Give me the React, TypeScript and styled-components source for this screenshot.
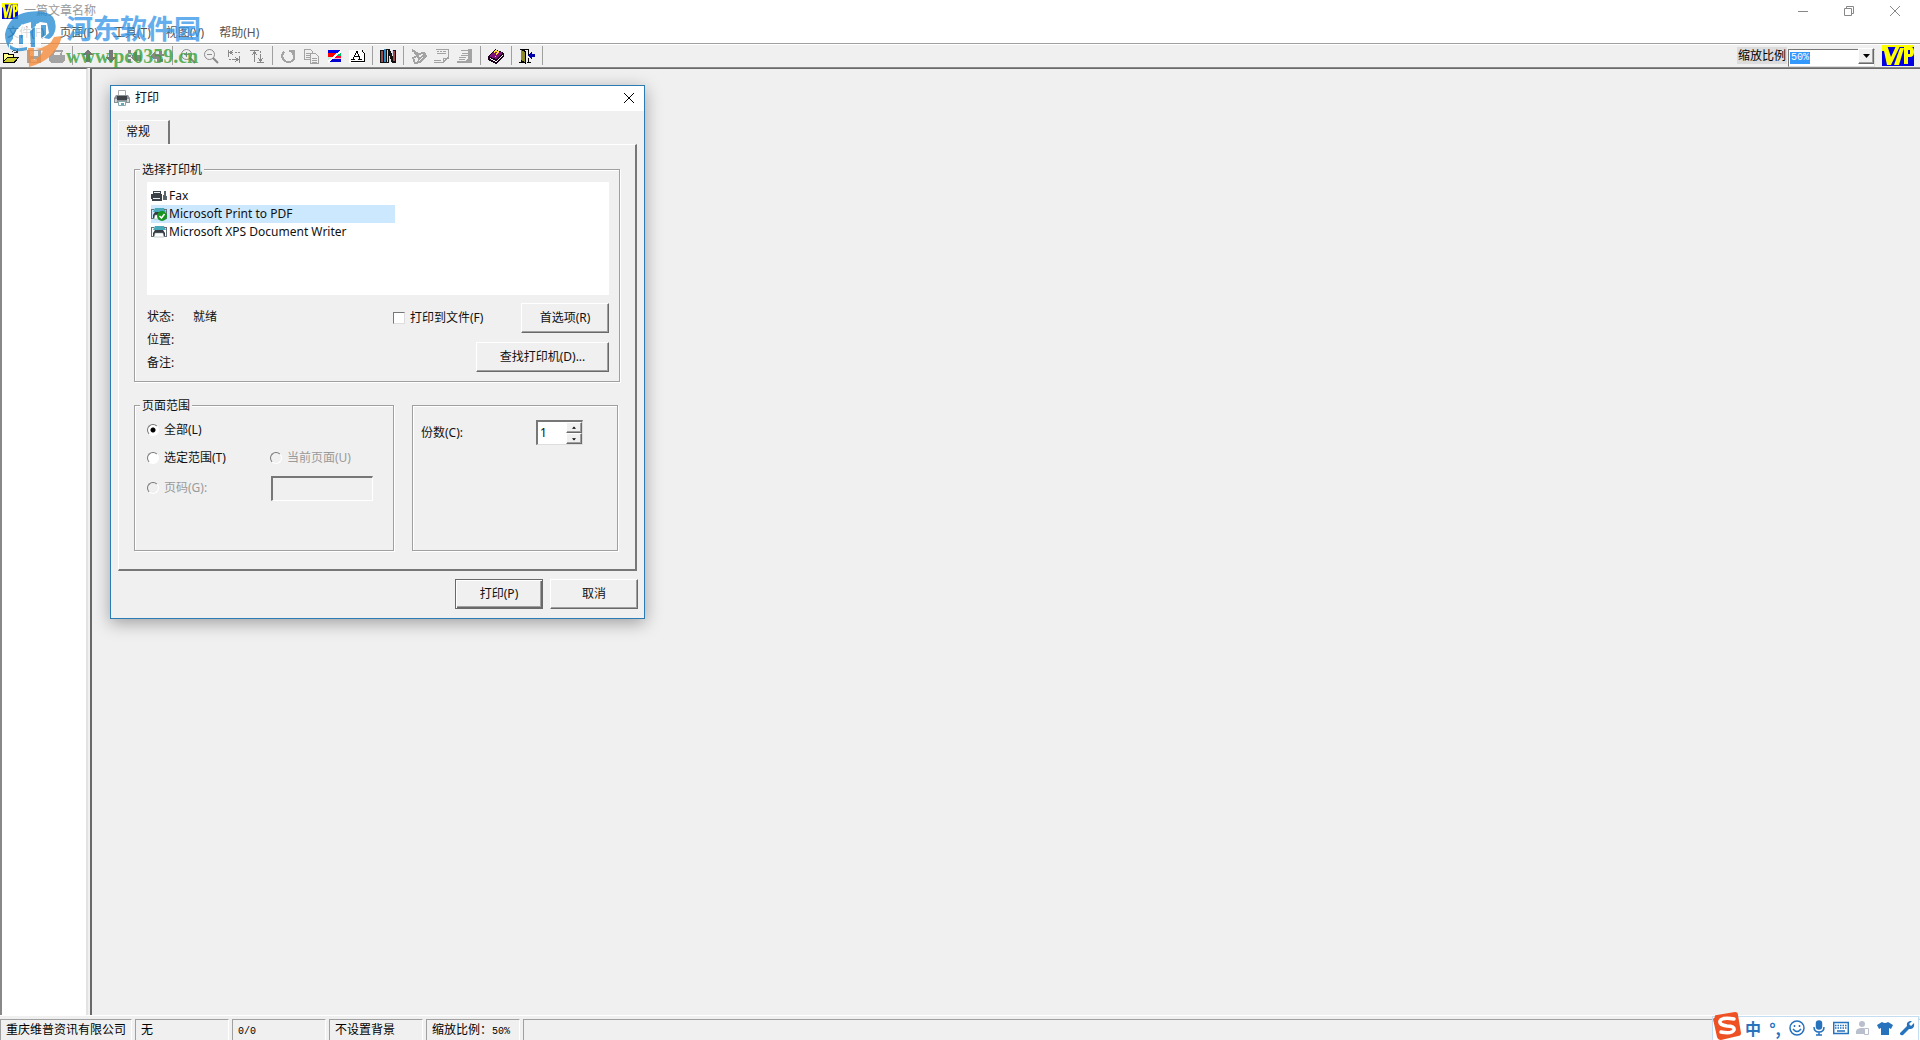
import React, { useState } from "react";
import styled, { createGlobalStyle, css } from "styled-components";

const face = "#f0f0f0";
const uiFont = '"Noto Sans", "Noto Sans CJK SC", sans-serif';
const songFont = '"Noto Sans CJK SC", sans-serif';

const GlobalStyle = createGlobalStyle`
  *, *::before, *::after { box-sizing: border-box; }
  body { margin: 0; font: 12px/18px ${uiFont}; color: #111; background: ${face}; }
  button, input, select { font: inherit; color: inherit; margin: 0; padding: 0; }
  svg { display: block; }
`;

const raised = css`
  border: 1px solid;
  border-color: #fff #696969 #696969 #fff;
  box-shadow: inset -1px -1px 0 #a0a0a0;
`;

/* ---------- application shell ---------- */

const Shell = styled.div`
  position: relative;
  display: flex;
  flex-direction: column;
  height: 100vh;
  overflow: hidden;
`;

const TitleBar = styled.header`
  display: flex;
  align-items: center;
  height: 22px;
  padding: 0 2px;
  background: #fff;
  color: #999;
`;

const AppTitle = styled.h1`
  flex: 1;
  margin: 0 0 0 6px;
  font-size: 12px;
  font-weight: 400;
`;

const WindowButton = styled.button`
  display: grid;
  place-items: center;
  width: 46px;
  height: 20px;
  border: 0;
  background: none;
`;

const MenuBar = styled.nav`
  display: flex;
  align-items: center;
  height: 21px;
  padding-left: 7px;
  gap: 15px;
  background: #fff;
`;

const MenuButton = styled.button`
  border: 0;
  background: none;
  color: #555;
  line-height: 20px;
`;

const ToolBar = styled.div`
  display: flex;
  align-items: center;
  height: 25px;
  background: ${face};
  border-top: 1px solid #a0a0a0;
  border-bottom: 1px solid #888;
  box-shadow: inset 0 1px 0 #fff;
`;

const ToolButton = styled.button`
  display: grid;
  place-items: center;
  width: 23px;
  height: 22px;
  padding-right: 1px;
  border: 0;
  background: none;
`;

const Separator = styled.span`
  width: 8px;
  height: 19px;
  background: linear-gradient(#a0a0a0, #a0a0a0) 3px 0 / 1px 19px no-repeat;
`;

const ZoomField = styled.div`
  display: flex;
  align-items: center;
  gap: 1px;
  margin-left: auto;
  margin-right: 6px;
`;

const ZoomLabel = styled.label`
  height: 17px;
  padding: 0 1px;
  background: #dcdcdc;
  color: #000;
  font-family: ${songFont};
  line-height: 16px;
`;

const SelectBox = styled.div`
  position: relative;
  width: 87px;
  height: 18px;
  margin-right: 6px;
`;

const ZoomSelect = styled.select`
  appearance: none;
  width: 100%;
  height: 100%;
  padding-left: 2px;
  border: 1px solid;
  border-color: #777 #ddd #ddd #777;
  border-radius: 0;
  background: linear-gradient(#3399ff, #3399ff) 1px 2px / 20px 12px no-repeat, #fff;
  color: #fff;
  font: 10px/12px "Liberation Mono", monospace;
`;

const SelectArrow = styled.span`
  position: absolute;
  top: 1px;
  right: 1px;
  display: grid;
  place-items: center;
  width: 16px;
  height: 16px;
  background: ${face};
  pointer-events: none;
  ${raised}
`;

const Workspace = styled.main`
  position: relative;
  display: flex;
  flex: 1;
  min-height: 0;
`;

const SidePanel = styled.aside`
  width: 88px;
  border-left: 2px solid #888;
  border-top: 1px solid #696969;
  border-right: 2px solid #e3e3e3;
  background: #fff;
`;

const Canvas = styled.section`
  flex: 1;
  margin-left: 2px;
  border: solid #696969;
  border-width: 1px 0 0 2px;
  background: ${face};
`;

const StatusBar = styled.footer`
  display: flex;
  gap: 3px;
  height: 25px;
  padding-top: 3px;
  border-top: 1px solid #fff;
  background: ${face};
  color: #000;
  font-family: ${songFont};
`;

const StatusCell = styled.div<{ $width?: number }>`
  ${(p) => (p.$width ? `width: ${p.$width}px;` : "flex: 1;")}
  padding-left: 5px;
  border: solid;
  border-width: 1px 1px 0 1px;
  border-color: #a0a0a0 #fff #fff #a0a0a0;
`;

const Mono = styled.span`
  font: 10px/18px "Liberation Mono", monospace;
`;

/* ---------- print dialog ---------- */

const Dialog = styled.div`
  position: absolute;
  top: 17px;
  left: 110px;
  width: 535px;
  border: 1px solid #2b7bb4;
  background: ${face};
  box-shadow: 0 4px 16px rgba(0, 0, 0, 0.34);
`;

const DialogTitle = styled.div`
  display: flex;
  align-items: center;
  gap: 5px;
  height: 25px;
  padding: 0 0 1px 3px;
  background: #fff;
`;

const DialogHeading = styled.h2`
  flex: 1;
  margin: 0;
  font-size: 12px;
  font-weight: 400;
`;

const CloseButton = styled.button`
  display: grid;
  place-items: center;
  width: 31px;
  height: 24px;
  border: 0;
  background: none;
`;

const DialogBody = styled.div`
  padding: 9px 6px 9px 7px;
`;

const Tab = styled.button`
  display: block;
  width: 52px;
  height: 24px;
  padding: 0 0 1px 7px;
  border: solid;
  border-width: 1px 2px 0 1px;
  border-color: #fff #777 #fff #fff;
  background: ${face};
  text-align: left;
`;

const TabPanel = styled.div`
  margin-right: 1px;
  padding: 15px 15px 18px;
  border: solid;
  border-width: 1px 2px 2px 1px;
  border-color: #fff #777 #777 #fff;
`;

const Group = styled.fieldset`
  min-width: 0;
  margin: 0;
  padding: 0 10px 7px 12px;
  border: 1px solid #a0a0a0;
  box-shadow: 1px 1px 0 #fff, inset 1px 1px 0 #fff;
`;

const Legend = styled.legend`
  height: 18px;
  margin-left: -7px;
  padding: 0 2px;
  background: ${face};
  line-height: 20px;
`;

const PrinterList = styled.ul`
  height: 113px;
  margin: 4px 0 8px;
  padding: 5px 4px;
  background: #fff;
  list-style: none;
`;

const PrinterRow = styled.li<{ $selected: boolean }>`
  display: flex;
  align-items: center;
  gap: 2px;
  width: 244px;
  height: 18px;
  background: ${(p) => (p.$selected ? "#cce8ff" : "transparent")};
`;

const Details = styled.div`
  display: flex;
  justify-content: space-between;
`;

const Facts = styled.dl`
  display: grid;
  grid-template-columns: 46px auto;
  grid-auto-rows: 23px;
  align-items: center;
  margin: 0;
  padding-top: 2px;
`;

const FactText = styled.dd`
  margin: 0;
`;

const Actions = styled.div`
  display: flex;
  flex-direction: column;
  align-items: flex-end;
  gap: 9px;
`;

const ActionRow = styled.div`
  display: flex;
  align-items: center;
  justify-content: space-between;
  width: 216px;
`;

const PushButton = styled.button<{ $wide?: boolean; $default?: boolean }>`
  width: ${(p) => (p.$wide ? 133 : 88)}px;
  height: 30px;
  background: ${face};
  ${raised}
  ${(p) =>
    p.$default &&
    css`
      border-color: #696969;
      box-shadow: inset 1px 1px 0 #fff, inset -1px -1px 0 #696969, inset -2px -2px 0 #a0a0a0;
    `}
`;

const Choice = styled.label<{ $disabled?: boolean }>`
  display: flex;
  align-items: center;
  gap: 5px;
  color: ${(p) => (p.$disabled ? "#9a9a9a" : "#111")};
`;

const CheckInput = styled.input`
  appearance: none;
  width: 12px;
  height: 12px;
  border: 1px solid;
  border-color: #777 #ddd #ddd #777;
  background: #fff;
  &:checked { background: radial-gradient(#000 3px, #fff 4px); }
`;

const RadioInput = styled.input`
  appearance: none;
  width: 12px;
  height: 12px;
  border: 1px solid;
  border-color: #777 #fff #fff #777;
  border-radius: 50%;
  background: #fff;
  &:checked { background: radial-gradient(circle, #000 2px, #fff 3px); }
  &:disabled { background: ${face}; }
`;

const Columns = styled.div`
  display: flex;
  align-items: flex-end;
  gap: 18px;
  margin-top: 14px;
  padding-right: 2px;
`;

const RangeGroup = styled(Group)`
  width: 260px;
  height: 155px;
`;

const RangeGrid = styled.div`
  display: grid;
  grid-template-columns: 123px 1fr;
  grid-template-rows: 28px 28px 32px;
  align-items: center;
  padding-top: 2px;
`;

const PagesInput = styled.input`
  width: 102px;
  height: 25px;
  margin-left: 1px;
  border: solid;
  border-width: 2px 1px 1px 2px;
  border-color: #777 #fff #fff #777;
  background: ${face};
`;

const CopiesGroup = styled(Group)`
  flex: 1;
  height: 146px;
  padding: 14px 0 0 8px;
`;

const CopiesRow = styled.div`
  display: flex;
  align-items: center;
  justify-content: space-between;
  padding-right: 34px;
`;

const Spinner = styled.div`
  display: flex;
  width: 47px;
  height: 25px;
  border: solid;
  border-width: 2px 1px 1px 2px;
  border-color: #777 #ddd #ddd #777;
  background: #fff;
`;

const CopiesInput = styled.input`
  appearance: textfield;
  flex: 1;
  min-width: 0;
  height: 20px;
  padding-left: 2px;
  border: 0;
  background: none;
  outline: none;
  &::-webkit-inner-spin-button { appearance: none; }
`;

const SpinColumn = styled.div`
  display: flex;
  flex-direction: column;
  width: 16px;
`;

const SpinButton = styled.button`
  display: grid;
  flex: 1;
  place-items: center;
  background: ${face};
  ${raised}
`;

const DialogFooter = styled.div`
  display: flex;
  justify-content: flex-end;
  gap: 7px;
  padding-top: 8px;
`;

/* ---------- floating overlays ---------- */

const Watermark = styled.div`
  position: absolute;
  top: 10px;
  left: 4px;
  display: flex;
  gap: 4px;
  opacity: 0.78;
  pointer-events: none;
`;

const WatermarkText = styled.div`
  padding-top: 2px;
`;

const WatermarkName = styled.div`
  color: #3a98ea;
  font: 700 27px/32px ${songFont};
`;

const WatermarkUrl = styled.div`
  color: #35a035;
  font: 700 20px/24px "Liberation Serif", serif;
`;

const ImeBar = styled.div`
  position: absolute;
  right: 1px;
  bottom: 0;
  display: flex;
  align-items: center;
  height: 24px;
  padding-bottom: 2px;
  border: 1px solid #c5ddf0;
  border-bottom: 0;
  background: #fff;
`;

const ImeLogo = styled.div`
  margin: -4px 1px 0 0;
`;

const ImeButton = styled.button`
  display: grid;
  place-items: center;
  width: 22px;
  height: 22px;
  border: 0;
  background: none;
  color: #2672bd;
  font: 700 16px/20px ${songFont};
`;

/* ---------- drawings ---------- */

const VipLogo = ({ w, h }: { w: number; h: number }) => (
  <svg width={w} height={h} viewBox="0 0 32 21" preserveAspectRatio="none">
    <path fill="#0000e0" d="M0 0h32v21H0z" />
    <path fill="#ff0" d="M0 0h32v2H0z" />
    <path fill="#ff0" d="M0 0h5l4 12L14 1h4L9 20H5L2 6H0z" />
    <path fill="#ff0" d="M18 3h4l-5 17h-5z" />
    <path fill="#ff0" fillRule="evenodd" d="M22 2h7q3 0 3 5t-4 5h-2v7h-4zM26 5v4h2V5z" />
  </svg>
);

const gray = "#a3a3a3";
const icons: Record<string, React.ReactNode> = {
  open: (
    <>
      <path fill="#000" d="M0 5h5l1 1h5v3h5l-4 6H0z" />
      <path fill="#ff8" d="M1 6h3l1 1h5v2H4l-3 4z" />
      <path fill="#cc3" d="M4 10h10l-3 4H1z" />
      <path fill="none" stroke="#333" d="M9 4q3-3 5 0M14 1v3h-3" />
    </>
  ),
  save: <path fill={gray} d="M1 2h14v13H1zM4 3v5h8V3zM5 11v3h6v-3z" fillRule="evenodd" />,
  print: <path fill={gray} d="M5 2h9l-1 5h3v6l-3 2H3l-3-2V8l3-2zM6 4l-1 3h6l1-3z" fillRule="evenodd" />,
  up: <path fill="#777" d="M8 1l5 6h-3v7H6V7H3z" />,
  down: <path fill="#777" d="M8 15l5-6h-3V2H6v7H3z" />,
  first: <path fill="#888" d="M2 2h3v3H2zM2 7h3v2H2zM8 4h3v3h4v6H8l-3-3zM2 11h3v3H2z" />,
  last: <path fill="#888" d="M1 8l5-5v3h4V3h3v3h2v2h-3v3h2v3H8v-3H5z" />,
  zoomIn: (
    <g fill="none" stroke="#8a8a8a">
      <circle cx="6.500" cy="6.500" r="5" />
      <path d="M4 6.500h5M6.500 4v5" />
      <path strokeWidth="2" d="M10 10l5 5" />
    </g>
  ),
  zoomOut: (
    <g fill="none" stroke="#8a8a8a">
      <circle cx="6.500" cy="6.500" r="5" />
      <path d="M4 6.500h5" />
      <path strokeWidth="2" d="M10 10l5 5" />
    </g>
  ),
  fitWidth: (
    <g fill="none" stroke="#888">
      <path d="M2.500 2v7M13.500 8v7M4 4.500h3M9 4.500h2M12 4.500h2M7 2L4 4.500 7 7M3 11.500h2M6 11.500h6M9 9l3 2.500L9 14" />
    </g>
  ),
  fitHeight: (
    <g fill="none" stroke="#888">
      <path d="M1 2.500h9M8 14.500h7M5.500 4v10M3 7l2.500-3L8 7M11.500 3v2M11.500 6v7M9 10l2.500 3 2.500-3" />
    </g>
  ),
  rotate: <path fill="none" stroke={gray} strokeWidth="2" d="M4 4Q1 7 3 11q3 4 7 3 5-2 4-6L12 4M9 3h5v5" />,
  copy: (
    <g fill="none" stroke={gray}>
      <path d="M1.500 1.500h6l2 2v8h-8zM3 5h4M3 7h4M3 9h4" />
      <path fill={face} d="M7.500 5.500h5l3 3v7h-8zM9 10h5M9 12h5M9 14h5" />
    </g>
  ),
  colours: (
    <>
      <path fill="#0000e8" d="M2 2h13L2 14z" />
      <path fill="#f00" d="M2 5h9L7 9H2z" />
      <path fill="#c8f0e0" d="M2 9h5l-5 5z" />
      <path fill="#f4b8d0" d="M15 2v12H3z" />
      <path fill="#0b6" d="M15 5v3h-5z" />
      <path fill="#f03" d="M9 8h6v2H7z" />
      <path fill="#0000d0" d="M6 11h9v3H3z" />
      <path stroke="#fff" strokeWidth="2" d="M2 14L15 3" />
    </>
  ),
  letter: (
    <>
      <path fill="#fff" d="M0 2h13l3 4v9H0z" />
      <path fill="none" stroke="#000" d="M13 2.500l2.500 3v8H2M4 11l4-8 3 8M6 8h4M2 11.500h4M9 11.500h4" />
    </>
  ),
  books: (
    <>
      <path fill="#111" d="M0 2h4v13H0zM8 1h2l1 3 2 5V2h3v13h-4L9 7v8H4V2z" />
      <path fill="#9a4b4b" d="M1 3h2v11H1zM13 3h2v10h-2z" />
      <path fill="#2b8bc8" d="M4 1h2v13H4z" />
      <path fill="#d8d8e8" d="M7 2h1v12H7zM9 9h1v5H9zM12 2h1v5h-1z" />
    </>
  ),
  scan: (
    <g fill="none" stroke={gray} strokeWidth="2">
      <path d="M1 2l6 4 6-1 2 3-6 6-5 1-2-5 6-3M4 5l5 6M7 12l7-6" />
    </g>
  ),
  note: (
    <g fill="none" stroke={gray}>
      <path d="M2 1.500h13M3 3.500h2M6 3.500h2M9 3.500h3M3 5.500h9M14.500 1v8l-5 5H0M9.500 14v-4h5M0 12.500h7" />
    </g>
  ),
  page: (
    <>
      <path fill={gray} d="M11 1h4v14H0v-2h8l3-3z" />
      <path stroke={gray} d="M4 2.500h7M5 5.500h7M4 7.500h7M2 9.500h7M2 11.500h6" />
    </>
  ),
  help: (
    <>
      <path fill="#1b001b" d="M7 1l9 4v4l-8 7-8-4V8z" />
      <path fill="#80107a" d="M7 2l8 3-7 6-7-3z" />
      <path fill="#fff" d="M2 10l6 3 7-6v1l-7 6-6-3z" />
      <path fill="none" stroke="#fd3" strokeWidth="1.500" d="M6 4q3-2 4 0 0 1-2 2M7.500 7.500v1" />
    </>
  ),
  exit: (
    <>
      <path fill="none" stroke="#000" d="M1 1.500h8.500v5M9.500 10v4M0 14.500h4M8 14.500h4" />
      <path fill="#000" d="M2 1l5 2v13l-5-2z" />
      <path fill="#8c8c2a" d="M2 2l4 2v10l-4-2z" />
      <path fill="#0000a8" d="M9 7l4-4v3h3v3h-3v3z" />
    </>
  ),
};

const Glyph = ({ name }: { name: string }) => (
  <svg width="16" height="16" viewBox="0 0 16 16" shapeRendering={name.startsWith("zoom") ? "auto" : "crispEdges"}>
    {icons[name]}
  </svg>
);

const PrinterGlyph = ({ kind }: { kind: "title" | "fax" | "pdf" | "xps" }) => (
  <svg width="16" height="16" viewBox="0 0 16 16">
    {kind === "title" && (
      <>
        <path fill="#fff" stroke="#aaa" d="M4.500.5h7v6h-7z" />
        <path fill="#8b9297" d="M2 5h12l2 3v5H0V8z" />
        <path fill="#cfd5d8" d="M1 9h2v3H1zM13 9h2v3h-2z" />
        <path fill="#3d4347" d="M3 6h10v4H3z" />
        <path fill="#fff" stroke="#8aa" d="M4.500 11.500h7v4h-7z" />
        <path fill="#56a9c9" d="M7 13h3v2H7z" />
      </>
    )}
    {kind === "fax" && (
      <>
        <path fill="#394147" d="M2 3h8v3h1v7H1v-2H0V6h2z" />
        <path fill="#e9eef0" d="M3 4h6v1H3zM2 10h7v1H2z" />
        <path fill="#58636a" d="M12 7h1V3h2v5h1v4h-4z" />
      </>
    )}
    {(kind === "xps" || kind === "pdf") && (
      <>
        <path fill="#4aa9b8" d="M4 2h9l2 4H2z" />
        <path fill="#657078" d="M0 3h3v1H1v8h2v1H0zM13 3h3v10h-3v-1h2V4h-2z" />
        <path fill="#343c42" d="M4 6h8l2 3v3H2V9z" />
        <path fill="#fff" stroke="#87989c" strokeWidth=".5" d="M4 9h8l1 4H3z" />
      </>
    )}
    {kind === "pdf" && (
      <>
        <circle cx="11" cy="10" r="5" fill="#16941f" />
        <path fill="none" stroke="#fff" strokeWidth="1.500" d="M8.500 10l2 2 3-4" />
      </>
    )}
  </svg>
);

const CrossGlyph = ({ color, size = 10 }: { color: string; size?: number }) => (
  <svg width={size} height={size} viewBox="0 0 10 10">
    <path stroke={color} d="M0 0l10 10M10 0L0 10" />
  </svg>
);

const ArrowGlyph = ({ up, size = 7 }: { up?: boolean; size?: number }) => (
  <svg width={size} height={size} viewBox="0 0 7 7">
    <path fill="#000" d={up ? "M0 5h7L3.500 1z" : "M0 2h7L3.500 6z"} />
  </svg>
);

const SiteLogo = () => (
  <svg width="58" height="57" viewBox="0 0 58 57">
    <path
      fill="#268bd2"
      d="M1 24Q5 5 24 2q18-3 25 5 4 6 2 14-2 6-6 8l-5-1q6-7 2-12-4-4-10-2v8l-5-4V12l-7 2-9 6v6l-6 8v4Q1 32 1 24z"
    />
    <path fill="#fff" d="M9 26l9-12 9 6 9-8 7 1 2 10-8 7v7h-6V25h-5v14h-7V26l-4 2v10h-6z" />
    <path fill="#268bd2" d="M6 35q5 5 17 2v3q-11 3-17-1zM15 25h4v9h-4zM26 21l5-4v20h-4zM37 15h5v10l-5 3z" />
    <path fill="#f58a38" d="M58 26Q52 50 25 57l-1-19h6v12q6-3 9-9l-7-2q14-2 18-12z" />
  </svg>
);

const SogouLogo = () => (
  <svg width="28" height="28" viewBox="0 0 28 28">
    <path fill="#ee5124" d="M2 5Q1 3 4 3L22 0q3 0 3 3l3 18q0 3-3 3L8 28q-3 0-4-3L0 7z" />
    <path fill="none" stroke="#fff" strokeWidth="3.500" strokeLinecap="round" d="M21 7Q9 5 7 9q-1 4 7 5 8 0 7 4-2 4-13 2" />
  </svg>
);

const imeIcons: Record<string, React.ReactNode> = {
  表情: (
    <g fill="none" stroke="currentColor" strokeWidth="1.500">
      <circle cx="8" cy="8" r="7" />
      <path d="M4 9q4 5 8 0M5.500 5v2M10.500 5v2" />
    </g>
  ),
  语音: (
    <g fill="none" stroke="currentColor" strokeWidth="1.500">
      <rect x="5.500" y="1" width="5" height="8" rx="2.500" fill="currentColor" />
      <path d="M3 7q0 5 5 5t5-5M8 12v3M5 15h6" />
    </g>
  ),
  键盘: (
    <g fill="none" stroke="currentColor" strokeWidth="1.500">
      <path d="M.7 2.500h14.600v11H.7zM4 11h8" />
      <path strokeDasharray="1.500 1" d="M2 5.500h12M2 8h12" />
    </g>
  ),
  账户: (
    <g fill="#b9bfcc">
      <circle cx="7" cy="4" r="3" />
      <path d="M1 14q-1-6 5-6h3v6z" />
      <path fill="#fff" stroke="#b9bfcc" d="M9.500 8.500h4v6h-4z" />
    </g>
  ),
  皮肤: <path fill="currentColor" d="M5 2q3 2 6 0l5 3-2 4-2-1v7H4V8L2 9 0 5z" />,
  工具: <path fill="currentColor" d="M1 13l7-7q-1-4 3-5h2l-3 3 2 2 3-3q1 5-3 6h-2l-6 6q-2 1-3-1z" />,
};

/* ---------- page ---------- */

const menus = ["文件(F)", "页面(P)", "工具(T)", "视图(V)", "帮助(H)"];

const toolGroups: [string, string][][] = [
  [["open", "打开"], ["save", "保存"], ["print", "打印"]],
  [["up", "上一页"], ["down", "下一页"], ["first", "首页"], ["last", "末页"]],
  [["zoomIn", "放大"], ["zoomOut", "缩小"], ["fitWidth", "适合宽度"], ["fitHeight", "适合高度"]],
  [["rotate", "旋转"], ["copy", "复制"], ["colours", "背景"], ["letter", "文字"]],
  [["books", "书库"]],
  [["scan", "识别"], ["note", "批注"], ["page", "页面"]],
  [["help", "帮助"]],
  [["exit", "退出"]],
];

const printers: { name: string; kind: "fax" | "pdf" | "xps" }[] = [
  { name: "Fax", kind: "fax" },
  { name: "Microsoft Print to PDF", kind: "pdf" },
  { name: "Microsoft XPS Document Writer", kind: "xps" },
];

function PrintDialog() {
  const [printer, setPrinter] = useState(1);
  const [range, setRange] = useState("all");
  const [copies, setCopies] = useState(1);

  return (
    <Dialog role="dialog" aria-labelledby="print-title">
      <DialogTitle>
        <PrinterGlyph kind="title" />
        <DialogHeading id="print-title">打印</DialogHeading>
        <CloseButton aria-label="关闭"><CrossGlyph color="#000" /></CloseButton>
      </DialogTitle>
      <DialogBody>
        <Tab role="tab" aria-selected>常规</Tab>
        <TabPanel role="tabpanel">
          <Group>
            <Legend>选择打印机</Legend>
            <PrinterList role="listbox" aria-label="选择打印机">
              {printers.map((p, i) => (
                <PrinterRow key={p.name} role="option" aria-selected={i === printer} $selected={i === printer} onClick={() => setPrinter(i)}>
                  <PrinterGlyph kind={p.kind} />
                  {p.name}
                </PrinterRow>
              ))}
            </PrinterList>
            <Details>
              <Facts>
                <dt>状态:</dt><FactText>就绪</FactText>
                <dt>位置:</dt><FactText />
                <dt>备注:</dt><FactText />
              </Facts>
              <Actions>
                <ActionRow>
                  <Choice><CheckInput type="checkbox" />打印到文件(F)</Choice>
                  <PushButton>首选项(R)</PushButton>
                </ActionRow>
                <PushButton $wide>查找打印机(D)...</PushButton>
              </Actions>
            </Details>
          </Group>
          <Columns>
            <RangeGroup>
              <Legend>页面范围</Legend>
              <RangeGrid>
                <Choice><RadioInput type="radio" name="range" checked={range === "all"} onChange={() => setRange("all")} />全部(L)</Choice>
                <span />
                <Choice><RadioInput type="radio" name="range" checked={range === "sel"} onChange={() => setRange("sel")} />选定范围(T)</Choice>
                <Choice $disabled><RadioInput type="radio" name="range" disabled />当前页面(U)</Choice>
                <Choice $disabled><RadioInput type="radio" name="range" disabled />页码(G):</Choice>
                <PagesInput aria-label="页码" disabled />
              </RangeGrid>
            </RangeGroup>
            <CopiesGroup>
              <CopiesRow>
                <label htmlFor="copies">份数(C):</label>
                <Spinner>
                  <CopiesInput id="copies" type="number" min={1} value={copies} onChange={(e) => setCopies(Number(e.target.value))} />
                  <SpinColumn>
                    <SpinButton aria-label="增加" onClick={() => setCopies(copies + 1)}><ArrowGlyph up size={4} /></SpinButton>
                    <SpinButton aria-label="减少" onClick={() => setCopies(Math.max(1, copies - 1))}><ArrowGlyph size={4} /></SpinButton>
                  </SpinColumn>
                </Spinner>
              </CopiesRow>
            </CopiesGroup>
          </Columns>
        </TabPanel>
        <DialogFooter>
          <PushButton $default>打印(P)</PushButton>
          <PushButton>取消</PushButton>
        </DialogFooter>
      </DialogBody>
    </Dialog>
  );
}

export default function App() {
  return (
    <>
      <GlobalStyle />
      <Shell>
        <TitleBar>
          <VipLogo w={16} h={16} />
          <AppTitle>一篇文章名称</AppTitle>
          <WindowButton aria-label="最小化">
            <svg width="10" height="10"><path stroke="#888" d="M0 5.500h10" /></svg>
          </WindowButton>
          <WindowButton aria-label="还原">
            <svg width="10" height="10"><path fill="none" stroke="#888" d="M.5 2.500h7v7h-7zM2.500 2V.5h7v7H8" /></svg>
          </WindowButton>
          <WindowButton aria-label="关闭"><CrossGlyph color="#888" /></WindowButton>
        </TitleBar>
        <MenuBar>
          {menus.map((m) => <MenuButton key={m}>{m}</MenuButton>)}
        </MenuBar>
        <ToolBar role="toolbar">
          {toolGroups.map((group) => (
            <React.Fragment key={group[0][0]}>
              {group.map(([name, label]) => (
                <ToolButton key={name} aria-label={label}><Glyph name={name} /></ToolButton>
              ))}
              <Separator />
            </React.Fragment>
          ))}
          <ZoomField>
            <ZoomLabel htmlFor="zoom">缩放比例</ZoomLabel>
            <SelectBox>
              <ZoomSelect id="zoom" defaultValue="50%">
                <option>50%</option>
                <option>100%</option>
              </ZoomSelect>
              <SelectArrow><ArrowGlyph /></SelectArrow>
            </SelectBox>
            <VipLogo w={32} h={21} />
          </ZoomField>
        </ToolBar>
        <Workspace>
          <SidePanel />
          <Canvas />
          <PrintDialog />
        </Workspace>
        <StatusBar>
          <StatusCell $width={132}>重庆维普资讯有限公司</StatusCell>
          <StatusCell $width={94}>无</StatusCell>
          <StatusCell $width={94}><Mono>0/0</Mono></StatusCell>
          <StatusCell $width={94}>不设置背景</StatusCell>
          <StatusCell $width={94}>缩放比例：<Mono>50%</Mono></StatusCell>
          <StatusCell />
        </StatusBar>
        <Watermark>
          <SiteLogo />
          <WatermarkText>
            <WatermarkName>河东软件园</WatermarkName>
            <WatermarkUrl>www.pc0359.cn</WatermarkUrl>
          </WatermarkText>
        </Watermark>
        <ImeBar>
          <ImeLogo><SogouLogo /></ImeLogo>
          <ImeButton>中</ImeButton>
          <ImeButton>°,</ImeButton>
          {Object.keys(imeIcons).map((k) => (
            <ImeButton key={k} aria-label={k}>
              <svg width="16" height="16" viewBox="0 0 16 16">{imeIcons[k]}</svg>
            </ImeButton>
          ))}
        </ImeBar>
      </Shell>
    </>
  );
}
